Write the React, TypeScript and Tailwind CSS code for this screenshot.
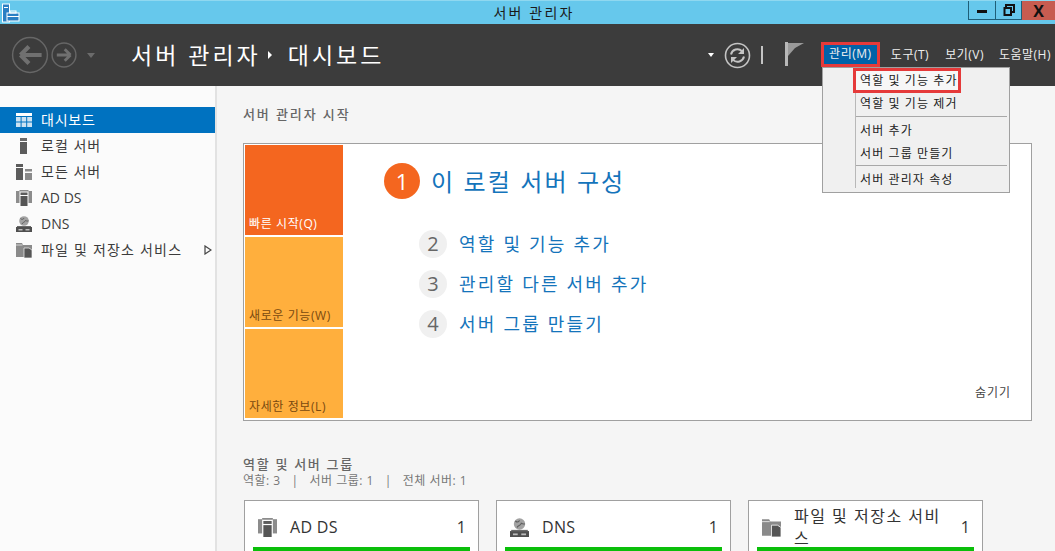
import { ReactNode } from 'react';

const font = { fontFamily: '"Open Sans", "Noto Sans CJK KR", sans-serif' };

function AppIcon() {
  return (
    <svg width="18" height="20" viewBox="0 0 18 20" className="shrink-0">
      <rect x="0.5" y="1" width="7" height="18" fill="#2a7fc4" stroke="#fff" />
      <rect x="2" y="4" width="4" height="1" fill="#fff" />
      <rect x="5" y="10" width="12" height="8" fill="#2a7fc4" stroke="#fff" />
      <rect x="8" y="8" width="6" height="2" fill="none" stroke="#fff" />
      <rect x="5" y="13" width="12" height="1" fill="#fff" />
    </svg>
  );
}

function NavArrow({ size, right }: { size: number; right?: boolean }) {
  return (
    <svg width={size} height={size} viewBox="0 0 36 36" className="shrink-0">
      <circle cx="18" cy="18" r="16.5" fill="none" stroke="#666" strokeWidth={right ? 2 : 1.4} />
      <path
        d={right ? 'M8 18h19M27 18l-8-8M27 18l-8 8' : 'M9 18h20M9 18l8-8M9 18l8 8'}
        fill="none"
        stroke="#707070"
        strokeWidth="4"
      />
    </svg>
  );
}

function Refresh() {
  return (
    <svg width="27" height="27" viewBox="0 0 27 27" className="shrink-0">
      <circle cx="13.5" cy="13.5" r="12" fill="none" stroke="#c4c4c4" strokeWidth="1.6" />
      <path d="M7 12.5a6.6 6.6 0 0 1 11-3.4M20 14.5a6.6 6.6 0 0 1-11 3.4" fill="none" stroke="#c4c4c4" strokeWidth="2" />
      <path d="M20 6v6h-6zM7 21v-6h6z" fill="#c4c4c4" />
    </svg>
  );
}

function Flag() {
  return (
    <svg width="20" height="24" viewBox="0 0 20 24" className="shrink-0 mb-[3px]">
      <rect x="0" y="0" width="3" height="24" fill="#b8b8b8" />
      <path d="M3 1h16L10 6 3 14z" fill="#9a9a9a" />
    </svg>
  );
}

function DashIcon({ color = '#fff' }: { color?: string }) {
  return (
    <svg width="16" height="14" viewBox="0 0 16 14" className="shrink-0">
      <rect width="16" height="3" fill={color} />
      <g fill={color} opacity="0.8">
        <rect y="4" width="4.6" height="4.5" />
        <rect x="5.6" y="4" width="4.6" height="4.5" />
        <rect x="11.2" y="4" width="4.8" height="4.5" />
        <rect y="9.5" width="4.6" height="4.5" />
        <rect x="5.6" y="9.5" width="4.6" height="4.5" />
        <rect x="11.2" y="9.5" width="4.8" height="4.5" />
      </g>
    </svg>
  );
}

function LocalIcon() {
  return (
    <svg width="16" height="16" viewBox="0 0 16 16" className="shrink-0">
      <rect x="4" y="0" width="7" height="3" fill="#6a6a6a" />
      <rect x="4" y="4" width="7" height="12" fill="#5c5c5c" />
    </svg>
  );
}

function AllIcon() {
  return (
    <svg width="16" height="16" viewBox="0 0 16 16" className="shrink-0">
      <rect x="0" y="0" width="7" height="3" fill="#5c5c5c" />
      <rect x="0" y="4" width="7" height="12" fill="#5c5c5c" />
      <rect x="9" y="5" width="7" height="2.5" fill="#8a8a8a" />
      <rect x="9" y="9" width="7" height="7" fill="#8a8a8a" />
    </svg>
  );
}

function AdIcon({ size = 16 }: { size?: number }) {
  return (
    <svg width={size} height={size} viewBox="0 0 16 16" className="shrink-0">
      <rect x="0" y="1" width="3.5" height="12" fill="#8c8c8c" />
      <rect x="12.5" y="1" width="3.5" height="12" fill="#8c8c8c" />
      <rect x="3.5" y="0" width="9" height="1.5" fill="#8c8c8c" />
      <rect x="4.5" y="2.5" width="7" height="2.5" fill="#5c5c5c" />
      <rect x="4.5" y="6" width="7" height="10" fill="#555" />
    </svg>
  );
}

function DnsIcon({ size = 16 }: { size?: number }) {
  return (
    <svg width={size} height={size} viewBox="0 0 16 16" className="shrink-0">
      <circle cx="8" cy="5" r="4.800" fill="#a2a2a2" />
      <path d="M4.500 2.500c1.500 1.500 3 .8 3.500-.5M6 8c.5-2 3-1.500 3.500-3.500 1 .5 2 .8 3 .3" stroke="#5f5f5f" fill="none" />
      <rect x="1" y="10" width="14" height="1" fill="#6a6a6a" />
      <rect x="0" y="11" width="16" height="5" fill="#4f4f4f" />
      <rect x="2.500" y="13" width="4" height="1.500" fill="#bbb" />
      <rect x="9.500" y="13" width="4" height="1.500" fill="#bbb" />
    </svg>
  );
}

function FilesIcon({ size = 16 }: { size?: number }) {
  return (
    <svg width={size} height={size} viewBox="0 0 16 16" className="shrink-0">
      <path d="M0 1h6l1 2h9v12H0z" fill="#8a8a8a" />
      <path d="M0 3h6.500" stroke="#d4d4d4" />
      <path d="M8 6h5l3 2v8H8z" fill="#555" stroke="#f5f5f5" strokeWidth="0.7" />
    </svg>
  );
}

function RestoreIcon() {
  return (
    <svg width="12" height="12" viewBox="0 0 12 12">
      <path d="M3 3V1h8v7H8.500" fill="none" stroke="#111" strokeWidth="2" />
      <rect x="1.500" y="4" width="6.500" height="7" fill="none" stroke="#111" strokeWidth="2" />
    </svg>
  );
}

const navItems: { label: string; icon: ReactNode; spaced?: boolean }[] = [
  { label: '로컬 서버', icon: <LocalIcon />, spaced: true },
  { label: '모든 서버', icon: <AllIcon />, spaced: true },
  { label: 'AD DS', icon: <AdIcon /> },
  { label: 'DNS', icon: <DnsIcon /> },
];

function Sidebar() {
  return (
    <aside className="w-[217px] shrink-0 bg-[#fbfbfb] border-r-2 border-[#e2e2e2] pt-[21px]">
      <div className="h-[26px] bg-[#0072c0] text-white flex items-center pl-4 gap-[9px] text-sm tracking-[0.8px]">
        <DashIcon />
        대시보드
      </div>
      {navItems.map((item) => (
        <div
          key={item.label}
          className={`h-[26px] flex items-center pl-4 gap-[9px] text-sm text-[#3c3c3c] ${item.spaced ? 'tracking-[1px]' : ''}`}
        >
          {item.icon}
          {item.label}
        </div>
      ))}
      <div className="h-[26px] flex items-center pl-4 pr-[3px] gap-[9px] text-sm text-[#3c3c3c]">
        <FilesIcon />
        <span className="flex-1 tracking-[1.2px]">파일 및 저장소 서비스</span>
        <svg width="8" height="10" viewBox="0 0 8 10" className="shrink-0">
          <path d="M1 1l6 4-6 4z" fill="none" stroke="#444" strokeWidth="1.2" />
        </svg>
      </div>
    </aside>
  );
}

function Tile({ label, color, textColor, h }: { label: string; color: string; textColor: string; h: string }) {
  return (
    <div className={`${color} ${textColor} ${h} flex items-end px-[4px] pb-[3px] text-xs tracking-[0.6px] whitespace-nowrap`}>
      {label}
    </div>
  );
}

function Step({ n, label }: { n: number; label: string }) {
  return (
    <div className="h-10 flex items-center gap-3">
      <span className="w-7 h-7 rounded-full bg-[#f0f0f0] text-[#666] flex items-center justify-center text-xl">{n}</span>
      <span className="text-lg text-[#1474bb] tracking-[2.2px]">{label}</span>
    </div>
  );
}

function RoleCard({ icon, title, wrap }: { icon: ReactNode; title: string; wrap?: boolean }) {
  return (
    <div className="w-[235px] h-[60px] shrink-0 bg-white border border-[#a0a0a0] px-[8px]">
      <div className="h-[46px] pt-[6px] flex items-center pl-[5px] pr-[4px]">
        {icon}
        <span className={`flex-1 ml-[13px] text-base text-[#333] ${wrap ? 'leading-[22px] pr-4 tracking-[1.5px]' : 'tracking-[0.3px]'}`}>
          {title}
        </span>
        <span className="text-base text-[#333]">1</span>
      </div>
      <div className="h-[6px] bg-[#0abf0a]" />
    </div>
  );
}

function MenuRow({ label, h }: { label: string; h: string }) {
  return <div className={`${h} flex items-center pl-[37px]`}>{label}</div>;
}

function ManageMenu() {
  return (
    <div className="absolute left-[822px] top-[67px] w-[188px] h-[126px] bg-[#f0f0f0] border border-[#a0a0a0] text-xs text-[#222] tracking-[1.1px] z-10">
      <div className="absolute left-[32px] top-0 bottom-[4px] w-px bg-[#b8b8b8]" />
      <div className="relative ml-[30px] w-[108px] h-[25px] bg-[#f7f7f7] border-[3px] border-[#e53a3a] flex items-center pl-[4px] whitespace-nowrap">
        역할 및 기능 추가
      </div>
      <MenuRow label="역할 및 기능 제거" h="h-[22px]" />
      <div className="mt-px ml-[33px] mr-[2px] h-px bg-[#a8a8a8]" />
      <MenuRow label="서버 추가" h="h-[27px]" />
      <MenuRow label="서버 그룹 만들기" h="h-[19px]" />
      <div className="mt-[2px] ml-[33px] mr-[2px] h-px bg-[#a8a8a8]" />
      <MenuRow label="서버 관리자 속성" h="h-[27px]" />
    </div>
  );
}

export default function App() {
  return (
    <div className="w-[1055px] h-[551px] overflow-hidden relative flex flex-col bg-[#f5f5f5]" style={font}>
      <header className="h-6 shrink-0 bg-[#66c8ec] border-t border-[#8fd8f0] flex items-center pl-[2px]">
        <AppIcon />
        <span className="flex-1 text-center text-sm text-[#1a1a1a] pl-[80px] tracking-[2.2px]">서버 관리자</span>
        <div className="flex h-[19px] self-start">
          <button className="w-[28px] bg-[#66c8ec] border border-t-0 border-[#1f5f78] flex items-center justify-center">
            <span className="w-[10px] h-[3px] bg-[#111] mt-[2px]" />
          </button>
          <button className="w-[26px] bg-[#66c8ec] border-r border-b border-[#1f5f78] flex items-center justify-center">
            <RestoreIcon />
          </button>
          <button className="w-[33px] bg-[#c75c50] text-[#111] font-bold text-base leading-none flex items-center justify-center">X</button>
        </div>
      </header>

      <div className="h-[62px] shrink-0 bg-[#3c3c3c] flex items-center text-white">
        <div className="flex items-center gap-[2px] pl-[11px] w-[131px]">
          <NavArrow size={38} />
          <NavArrow size={26} right />
          <span className="ml-2 w-0 h-0 border-x-[4px] border-x-transparent border-t-[5px] border-t-[#6b6b6b]" />
        </div>
        <div className="flex items-center text-[23px] tracking-[3px]">
          서버 관리자
          <span className="ml-[7px] mr-[16px] w-0 h-0 border-y-[4px] border-y-transparent border-l-[4px] border-l-white" />
          대시보드
        </div>
        <div className="flex-1" />
        <span className="mr-[10px] w-0 h-0 border-x-[3.5px] border-x-transparent border-t-[4px] border-t-white" />
        <Refresh />
        <span className="ml-[10px] mr-[22px] w-[2px] h-[18px] bg-[#c4c4c4]" />
        <Flag />
        <nav className="ml-[16px] flex items-center text-xs text-[#eee] pr-[4px] tracking-[0.5px] whitespace-nowrap">
          <span className="w-[59px] h-[25px] mb-[2px] bg-[#0062a8] border-[3px] border-[#e53a3a] flex items-center justify-center">관리(M)</span>
          <span className="ml-[11px]">도구(T)</span>
          <span className="ml-[16px]">보기(V)</span>
          <span className="ml-[15px]">도움말(H)</span>
        </nav>
      </div>

      <div className="flex-1 flex min-h-0">
        <Sidebar />
        <main className="flex-1 pl-[26px] pt-[19px] min-w-0">
          <h2 className="text-[13px] font-medium text-[#666] h-5 tracking-[1.9px]">서버 관리자 시작</h2>
          <section className="mt-[18px] w-[789px] h-[278px] bg-white border border-[#a0a0a0] flex">
            <div className="w-[99px] pl-px shrink-0 pt-px flex flex-col gap-[2px]">
              <Tile label="빠른 시작(Q)" color="bg-[#f4661f]" textColor="text-white" h="h-[90px]" />
              <Tile label="새로운 기능(W)" color="bg-[#ffaf3d]" textColor="text-[#7a4a10]" h="h-[90px]" />
              <Tile label="자세한 정보(L)" color="bg-[#ffaf3d]" textColor="text-[#7a4a10]" h="h-[89px]" />
            </div>
            <div className="flex-1 pl-[41px] pt-[19px] relative">
              <div className="flex items-center gap-[11px]">
                <span className="w-9 h-9 rounded-full bg-[#f4661f] text-white flex items-center justify-center text-[22px]">1</span>
                <span className="text-2xl text-[#1474bb] tracking-[2.1px] mt-[2px]">이 로컬 서버 구성</span>
              </div>
              <div className="mt-[25px] ml-[35px]">
                <Step n={2} label="역할 및 기능 추가" />
                <Step n={3} label="관리할 다른 서버 추가" />
                <Step n={4} label="서버 그룹 만들기" />
              </div>
              <span className="absolute right-[20px] bottom-[19px] text-xs text-[#444] tracking-[1px]">숨기기</span>
            </div>
          </section>
          <h2 className="mt-[34px] text-[13px] font-medium text-[#666] leading-[18px] tracking-[1.7px]">역할 및 서버 그룹</h2>
          <p className="text-xs text-[#777] leading-[16px] tracking-[0.5px] whitespace-nowrap">역할: 3&nbsp;&nbsp; |&nbsp;&nbsp; 서버 그룹: 1&nbsp;&nbsp; |&nbsp;&nbsp; 전체 서버: 1</p>
          <div className="mt-[11px] ml-px flex gap-[17px]">
            <RoleCard icon={<AdIcon size={19} />} title="AD DS" />
            <RoleCard icon={<DnsIcon size={19} />} title="DNS" />
            <RoleCard icon={<FilesIcon size={19} />} title="파일 및 저장소 서비스" wrap />
          </div>
        </main>
      </div>

      <ManageMenu />
    </div>
  );
}
